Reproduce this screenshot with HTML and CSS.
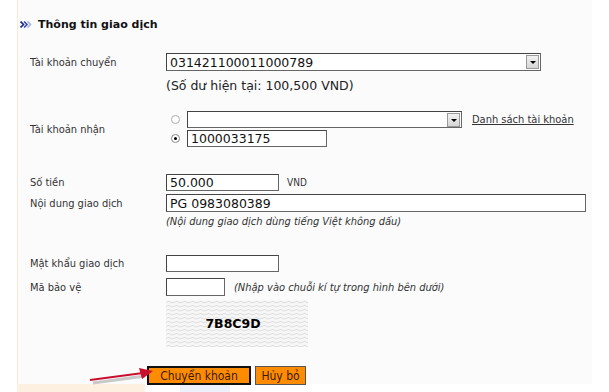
FILE: index.html
```html
<!DOCTYPE html>
<html lang="vi">
<head>
<meta charset="UTF-8">
<title>Thông tin giao dịch</title>
<link rel="stylesheet" href="styles.css">
</head>
<body>

<div class="panel">
  <h3 class="title">
    <svg class="bullet" width="12" height="7" viewBox="0 0 12 7">
      <path d="M0.5 0.5 L3.5 3.5 L0.5 6.5" fill="none" stroke="#1c2c8c" stroke-width="1.6"/>
      <path d="M4 0.5 L7 3.5 L4 6.5" fill="none" stroke="#3a4cb0" stroke-width="1.6"/>
      <path d="M7.5 0.5 L10.5 3.5 L7.5 6.5" fill="none" stroke="#a8b4e4" stroke-width="1.6"/>
    </svg>Thông tin giao dịch
  </h3>

  <div class="row row-from">
    <div class="label">Tài khoản chuyển</div>
    <div class="select select-wide">
      <span class="select-text">031421100011000789</span>
      <span class="select-btn"></span>
    </div>
  </div>
  <div class="row row-balance">
    <div class="label"></div>
    <div class="balance">(Số dư hiện tại: 100,500 VND)</div>
  </div>

  <div class="row row-to">
    <div class="label">Tài khoản nhận</div>
    <div class="to-fields">
      <div class="to-line">
        <span class="radio"></span>
        <div class="select select-mid">
          <span class="select-text"></span>
          <span class="select-btn"></span>
        </div>
        <a class="link" href="#">Danh sách tài khoản</a>
      </div>
      <div class="to-line to-line2">
        <span class="radio checked"></span>
        <div class="input input-acc">1000033175</div>
      </div>
    </div>
  </div>

  <div class="row row-amount">
    <div class="label">Số tiền</div>
    <div class="input input-short">50.000</div>
    <span class="unit">VND</span>
  </div>
  <div class="row row-note">
    <div class="label">Nội dung giao dịch</div>
    <div class="input input-long">PG 0983080389</div>
  </div>
  <div class="row row-hint">
    <div class="label"></div>
    <div class="hint">(Nội dung giao dịch dùng tiếng Việt không dấu)</div>
  </div>

  <div class="row row-pass">
    <div class="label">Mật khẩu giao dịch</div>
    <div class="input input-short"></div>
  </div>
  <div class="row row-code">
    <div class="label">Mã bảo vệ</div>
    <div class="input input-code"></div>
    <span class="hint hint-code">(Nhập vào chuỗi kí tự trong hình bên dưới)</span>
  </div>
  <div class="row row-captcha">
    <div class="label"></div>
    <div class="captcha">
      <svg class="captcha-bg" width="142" height="47">
        <defs>
          <pattern id="wave" width="8" height="4" patternUnits="userSpaceOnUse">
            <path d="M0 3 Q2 0 4 2 T8 2" fill="none" stroke="#d9d9d9" stroke-width="0.9"/>
          </pattern>
        </defs>
        <rect width="142" height="47" fill="#f7f7f7"/>
        <rect width="142" height="47" fill="url(#wave)"/>
      </svg>
      <span class="captcha-text">7B8C9D</span>
    </div>
  </div>

  <div class="buttons">
    <button class="btn btn-main">Chuyển khoản</button>
    <button class="btn btn-cancel">Hủy bỏ</button>
    <svg class="arrow" width="80" height="20" viewBox="0 0 80 20">
      <path d="M6 17 L58 10" stroke="#999" stroke-width="3" opacity="0.5"/>
      <path d="M3 14 L56 7" stroke="#c8102e" stroke-width="2"/>
      <path d="M52 2 L66 5 L55 13 Z" fill="#c8102e"/>
    </svg>
  </div>
</div>
<div class="footer-strip"></div>

</body>
</html>
```

FILE: styles.css
```css
body {
  margin: 0;
  background: #fff;
  font-family: "DejaVu Sans Condensed", "DejaVu Sans", sans-serif;
  color: #333;
}
.panel {
  position: relative;
  margin-left: 17px;
  width: 575px;
  height: 384px;
  background: #fbfbfc;
  border-left: 1px solid #fbe9d3;
  box-sizing: border-box;
  padding-top: 15px;
  padding-left: 12px;
}
.title {
  margin: 0 0 0 -10px;
  height: 18px;
  display: flex;
  align-items: center;
  font-size: 11px;
  font-weight: bold;
  font-family: "DejaVu Sans", sans-serif;
  color: #111;
}
.bullet {
  margin-right: 6px;
}
.row {
  display: flex;
  align-items: center;
}
.label {
  width: 136px;
  flex: none;
  font-size: 11px;
  color: #333;
}
.row-from { margin-top: 20px; }
.row-balance { margin-top: 6px; height: 16px; }
.row-to { margin-top: 18px; }
.row-amount { margin-top: 27px; }
.row-note { margin-top: 3px; }
.row-hint { margin-top: 2px; height: 14px; }
.row-pass { margin-top: 27px; }
.row-code { margin-top: 6px; }
.row-captcha { margin-top: 4px; }

.select, .input {
  box-sizing: border-box;
  height: 18px;
  border: 1px solid #666;
  border-top-color: #444;
  border-left-color: #444;
  background: #fff;
  font-family: "DejaVu Sans", sans-serif;
  font-size: 12.5px;
  color: #111;
  display: flex;
  align-items: center;
  padding-left: 3px;
}
.select-wide { width: 375px; }
.select-mid { width: 275px; height: 17px; }
.select-text { flex: 1; }
.select-btn {
  width: 13px;
  height: 14px;
  margin-right: 1px;
  box-sizing: border-box;
  border: 1px solid #999;
  background: linear-gradient(#f2f2f2, #d6d6d6);
  position: relative;
}
.select-btn::after {
  content: "";
  position: absolute;
  left: 3px;
  top: 5px;
  border-left: 3px solid transparent;
  border-right: 3px solid transparent;
  border-top: 3px solid #000;
}
.balance {
  font-family: "DejaVu Sans", sans-serif;
  font-size: 12.5px;
  color: #222;
}
.to-fields {
  margin-left: 5px;
}
.to-line {
  display: flex;
  align-items: center;
}
.to-line2 { margin-top: 2px; }
.radio {
  width: 9px;
  height: 9px;
  border: 1px solid #aaa;
  border-radius: 50%;
  background: #fff;
  box-sizing: border-box;
  margin-right: 7px;
  position: relative;
}
.radio.checked {
  border-color: #888;
}
.radio.checked::after {
  content: "";
  position: absolute;
  left: 2px;
  top: 2px;
  width: 3px;
  height: 3px;
  background: #000;
  border-radius: 50%;
}
.link {
  margin-left: 10px;
  font-size: 11px;
  color: #333;
  text-decoration: underline;
}
.input-acc { width: 140px; height: 17px; }
.input-short { width: 113px; height: 17px; }
.input-long { width: 420px; }
.input-code { width: 59px; }
.unit {
  margin-left: 8px;
  font-size: 10px;
  color: #333;
}
.hint {
  font-size: 11px;
  font-style: italic;
  color: #333;
}
.hint-code { margin-left: 9px; }
.captcha {
  position: relative;
  width: 142px;
  height: 47px;
  display: flex;
  align-items: center;
  justify-content: center;
}
.captcha-bg {
  position: absolute;
  left: 0;
  top: 0;
}
.captcha-text {
  position: relative;
  margin-right: 8px;
  font-family: "DejaVu Sans", sans-serif;
  font-weight: bold;
  font-size: 12.5px;
  color: #000;
}
.buttons {
  margin-top: 19px;
  margin-left: 117px;
  display: flex;
  gap: 4px;
  position: relative;
}
.btn {
  height: 19px;
  padding: 0 6px;
  background: #ff8c00;
  border: 1px solid #555;
  font-family: "DejaVu Sans Condensed", "DejaVu Sans", sans-serif;
  font-size: 12px;
  color: #3a1a00;
}
.btn-main {
  width: 104px;
  border: 2px solid #111;
}
.btn-cancel {
  width: 51px;
  padding: 0;
}
.arrow {
  position: absolute;
  left: -60px;
  top: 0;
}
.footer-strip {
  height: 8px;
  background: linear-gradient(90deg, #fff 17px, #fdf0e0 17px 145px, #fff 145px 180px, #eef0fb 180px 230px, #fff 230px);
}
```
